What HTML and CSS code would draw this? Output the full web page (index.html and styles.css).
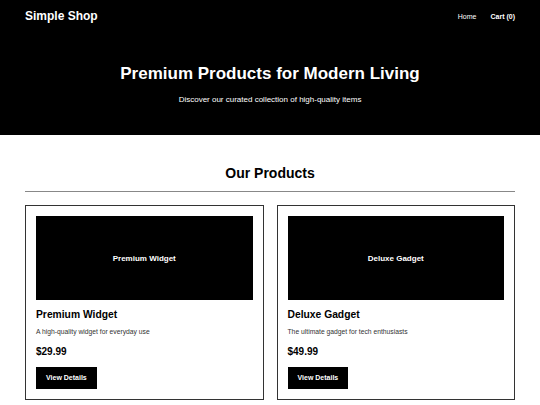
FILE: index.html
```html
<!DOCTYPE html>
<html lang="en">
<head>
    <meta charset="UTF-8">
    <meta name="viewport" content="width=device-width, initial-scale=1.0">
    <title>Simple Shop</title>
    <link rel="stylesheet" href="styles.css">
</head>
<body>
    <header class="site-header">
        <nav class="nav">
            <div class="logo">Simple Shop</div>
            <div class="nav-links">
                <a href="#" class="nav-link">Home</a>
                <a href="#" class="nav-link cart">Cart (0)</a>
            </div>
        </nav>
        <div class="hero">
            <h1 class="hero-title">Premium Products for Modern Living</h1>
            <p class="hero-text">Discover our curated collection of high-quality items</p>
        </div>
    </header>

    <main class="products">
        <h2 class="section-title">Our Products</h2>
        <div class="product-grid">
            <div class="card">
                <div class="card-image">Premium Widget</div>
                <h3 class="card-title">Premium Widget</h3>
                <p class="card-desc">A high-quality widget for everyday use</p>
                <div class="card-price">$29.99</div>
                <a href="#" class="btn">View Details</a>
            </div>
            <div class="card">
                <div class="card-image">Deluxe Gadget</div>
                <h3 class="card-title">Deluxe Gadget</h3>
                <p class="card-desc">The ultimate gadget for tech enthusiasts</p>
                <div class="card-price">$49.99</div>
                <a href="#" class="btn">View Details</a>
            </div>
        </div>
    </main>
</body>
</html>
```

FILE: styles.css
```css
body{
    margin: 0;
    font-family: "Liberation Sans", Arial, sans-serif;
    background-color: #fff;
    color: #000;
}
.site-header{
    background-color: #000;
    color: #fff;
    padding: 0 25px 30px;
}
.nav{
    display: flex;
    justify-content: space-between;
    align-items: center;
    height: 32px;
}
.logo{
    font-size: 12px;
    font-weight: bold;
}
.nav-links{
    display: flex;
    gap: 14px;
}
.nav-link{
    color: #fff;
    text-decoration: none;
    font-size: 7px;
}
.cart{
    font-weight: bold;
}
.hero{
    text-align: center;
    padding-top: 31px;
}
.hero-title{
    margin: 0;
    font-size: 17px;
    line-height: 22px;
}
.hero-text{
    margin: 10px 0 0;
    font-size: 8px;
    line-height: 10px;
}
.products{
    padding: 30px 25px 0;
}
.section-title{
    margin: 0;
    font-size: 14px;
    line-height: 17px;
    text-align: center;
    padding-bottom: 9px;
    border-bottom: 1px solid #888;
}
.product-grid{
    display: grid;
    grid-template-columns: 1fr 1fr;
    gap: 13px;
    margin-top: 13px;
}
.card{
    border: 1px solid #333;
    padding: 10px;
}
.card-image{
    background-color: #000;
    color: #fff;
    height: 84px;
    display: flex;
    align-items: center;
    justify-content: center;
    font-size: 8px;
    font-weight: bold;
}
.card-title{
    margin: 9px 0 0;
    font-size: 10.3px;
    line-height: 12px;
}
.card-desc{
    margin: 7px 0 0;
    font-size: 6.75px;
    line-height: 8px;
    color: #333;
}
.card-price{
    margin-top: 10px;
    font-size: 10px;
    line-height: 12px;
    font-weight: bold;
}
.btn{
    display: inline-block;
    margin-top: 9px;
    background-color: #000;
    color: #fff;
    text-decoration: none;
    font-size: 7px;
    font-weight: bold;
    line-height: 8px;
    padding: 7px 10px;
}
```
